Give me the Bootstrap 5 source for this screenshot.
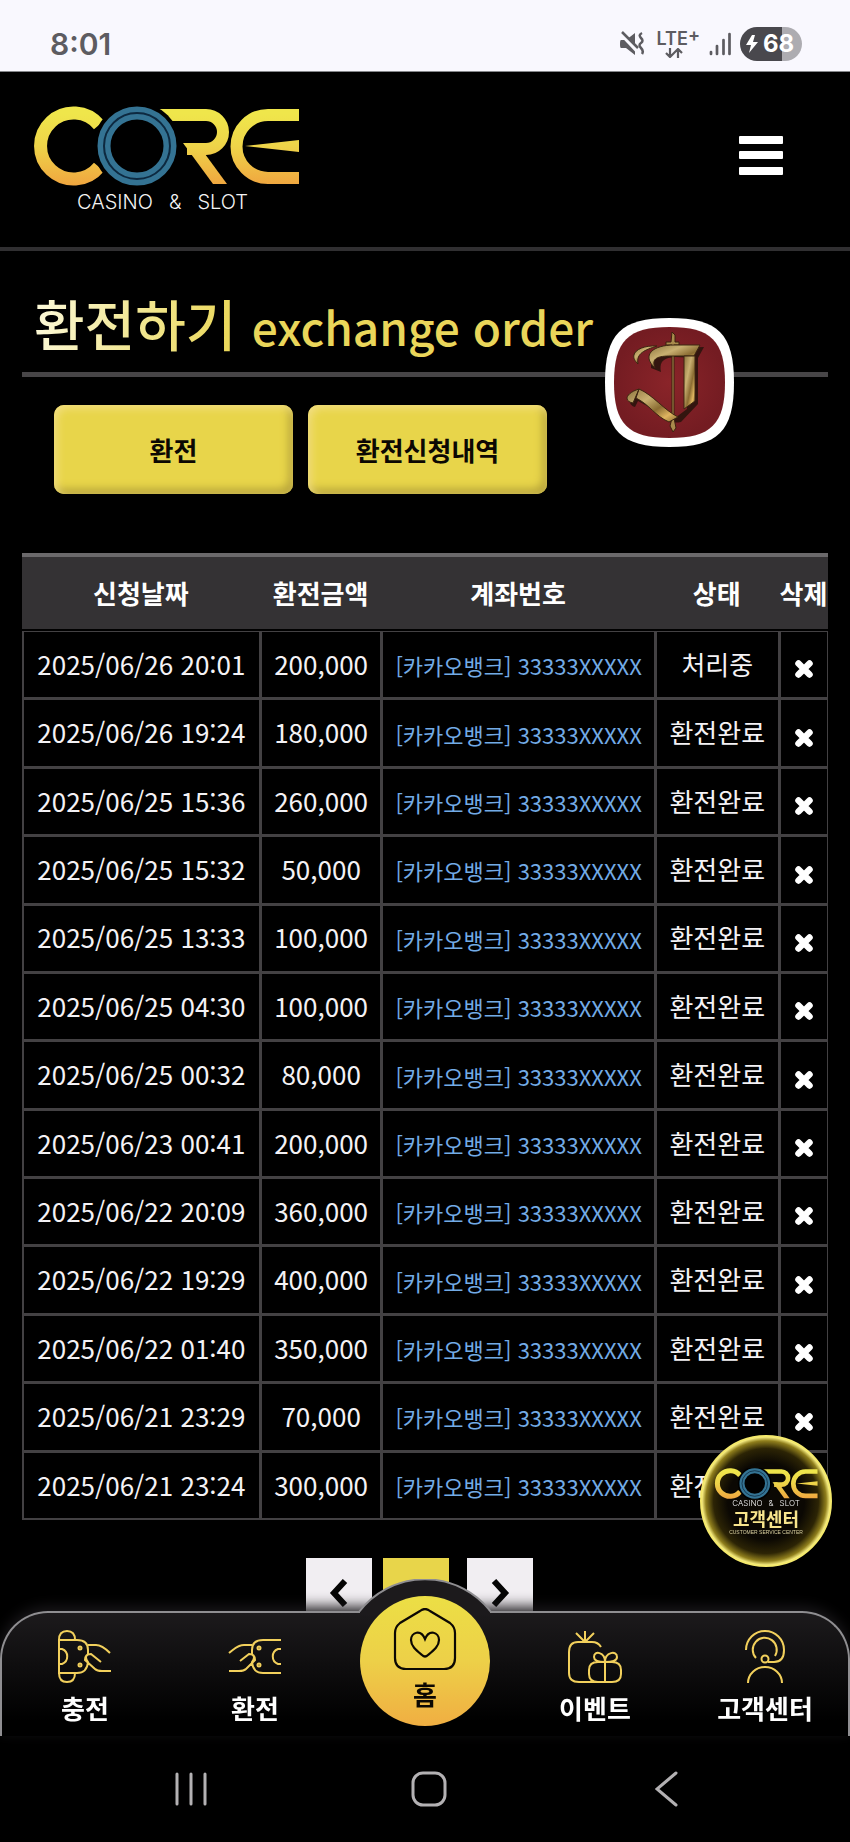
<!DOCTYPE html>
<html lang="ko">
<head>
<meta charset="utf-8">
<meta name="viewport" content="width=device-width, initial-scale=1">
<title>환전하기 - CORE CASINO &amp; SLOT</title>
<link rel="stylesheet" href="https://cdn.jsdelivr.net/npm/bootstrap@5.3.0/dist/css/bootstrap.min.css">
<style>
:root{--gold:#e8d54a;--line:#434143;--icon:#f2d05c}
body{background:#000;color:#f4f2f5;font-family:"Noto Sans CJK KR",sans-serif;font-size:26px;line-height:1.4}
a{color:inherit;text-decoration:none}
svg{display:block;flex:none}
.status-bar{height:72px;background:#f9f8fe;color:#5d5c61;padding:16px 48px 0 50px;font-family:Inter,sans-serif;border-bottom:1px solid #85878a}
.clock{font-size:30px;font-weight:600;line-height:32px}
.net{font-size:18px;font-weight:600;line-height:18px}
.net sup{font-size:18px;top:-3px;line-height:0;vertical-align:baseline}
.mute{margin-right:12px}
.battery{width:62px;height:34px;border-radius:17px;background:linear-gradient(90deg,#49484d 68%,#adacb1 68%);color:#fff;font-size:24px;font-weight:700;line-height:34px;padding-left:5px}
.top-head{height:179px;padding:34px 64px 0 32px;border-bottom:4px solid #302f31}
.tagline{font-family:Inter,sans-serif;font-size:20px;line-height:24px;font-weight:300;gap:16px;color:#f4f4f4}
.top-head .tagline{padding:4px 0 0 45px}
.burger{border:0;background:none;padding:0;margin-top:30px}
.page-head{margin:35px 22px 0;padding-left:12px;height:91px;border-bottom:5px solid #474547}
.page-title{font-size:55px;line-height:72px;font-weight:500;margin:0;white-space:nowrap}
.page-title span{background:linear-gradient(100deg,#fdfadd 0,#f3e99b 45%,#ead654 100%);-webkit-background-clip:text;background-clip:text;color:transparent}
.page-title .en{font-size:46px;background:none;color:#ead65a}
.tabs-row{padding:28px 54px 0;gap:15px}
.btn-gold{width:239px;height:89px;border:0;border-radius:10px;background:var(--gold);color:#0c0803;font-size:26px;font-weight:700;box-shadow:inset 3px 3px 8px #f3df83,inset -4px -5px 8px #b5a238}
.btn-gold:hover{background:var(--gold);color:#0c0803}
.order-wrap{margin:59px 22px 0}
.orders{table-layout:fixed;width:100%;height:967px;border-collapse:separate;border-spacing:0;text-align:center;white-space:nowrap}
.orders th{height:78px;padding:0;background:#343234;border-top:4px solid #6b696b;border-bottom:2px solid #000;font-size:26px;font-weight:700;color:#fff}
.orders td{padding:0 0 1px;border:solid var(--line);border-width:1px 1px 2px 2px;font-size:26px}
.orders td.acct{font-size:22px;color:#73abe6;padding:2px 0 0}
.orders td.del{padding:8px 0 0}
.del button{border:0;background:none;padding:0;color:#fff}
.c-date{width:29.5%}.c-amt{width:15.1%}.c-acct{width:33.9%}.c-state{width:15.4%}.c-del{width:6.1%}
.pager{margin:38px 0 0;padding:0 11px 200px 0}
.pager a{width:66px;height:66px;background:#f1eef2;color:#050505}
.pager a.now{background:var(--gold);margin:0 18px 0 11px}
.chat-app{position:absolute;left:605px;top:318px}
.service{position:fixed;right:18px;bottom:275px;width:132px;height:132px;border-radius:50%;background:radial-gradient(closest-side,#0b0803 60%,#2c2405 82%,#8f7e1c 94%,#f5eb80 100%);border:2px solid #f4e96d;padding-top:31px;z-index:5}
.service .tagline{font-size:8px;line-height:9px;gap:6px}
.service b{font-size:18px;line-height:20px;color:#f8e58c}
.service small{font-family:"Liberation Sans",sans-serif;font-size:5px;line-height:8px;color:#d8cfa0}
.tabbar{height:125px;border:2px solid #8f8e91;border-bottom:0;border-radius:48px 48px 0 0;background:linear-gradient(#1c1a1c,#000 88%);box-shadow:0 -4px 14px #1b191c;padding-top:17px;color:#fff}
.tab-row{margin:0 -2px}
.tabbar a{font-weight:700;font-size:26px;line-height:34px;gap:7px}
.tab-row>*{flex:1 1 0}
.tabbar svg{stroke:var(--icon)}
.bump{position:absolute;left:50%;top:-34px;margin-left:-70px}
.tabbar .home{position:absolute;left:50%;top:-17px;margin-left:-65px;width:130px;height:130px;border-radius:50%;background:linear-gradient(#ecdf45,#edd048 50%,#f0ae42);padding-top:12px;color:#0c0803;gap:6px}
.tabbar .home svg{stroke:#0c0803}
.sys-nav{height:106px;background:#000;padding:0 64px 0 72px}
.sys-nav button{border:0;background:none;flex:1 1 0;padding:0}
</style>
</head>
<body>
<svg width="0" height="0" class="position-absolute" aria-hidden="true">
  <defs>
    <linearGradient id="gold" gradientUnits="userSpaceOnUse" x1="0" y1="0" x2="0" y2="80"><stop offset=".1" stop-color="#efe64b"/><stop offset=".5" stop-color="#eed449"/><stop offset="1" stop-color="#f0a53f"/></linearGradient>
    <symbol id="core" viewBox="0 0 268 80">
      <path d="M67 19A33 33 0 1 0 67 61" fill="none" stroke="url(#gold)" stroke-width="13"/>
      <g fill="none" stroke-width="12" stroke="url(#gold)"><path d="M125 9H174A17 17 0 0 1 174 43H155"/><path d="M267 9H236A31.500 31.500 0 0 0 236 72H267"/></g>
      <path d="M151 37H163L173 48L195 78H181Z" fill="url(#gold)"/>
      <path d="M213 40L267 34V46Z" fill="url(#gold)"/>
      <circle cx="105" cy="40" r="43.500" fill="#000"/>
      <circle cx="105" cy="40" r="33" fill="none" stroke="#347393" stroke-width="13"/>
      <circle cx="105" cy="40" r="33" fill="none" stroke="#0d2940" stroke-width="2"/>
    </symbol>
    <symbol id="x" viewBox="0 0 20 20"><path d="M4.500 4.500L15.500 15.500M15.500 4.500L4.500 15.500" stroke="currentColor" stroke-width="6.500" stroke-linecap="round"/></symbol>
  </defs>
</svg>

<div class="status-bar d-flex justify-content-between align-items-center">
  <span class="clock">8:01</span>
  <div class="d-flex align-items-center">
    <svg class="mute" width="26" height="26" viewBox="0 0 26 26" fill="#5d5c61"><path d="M2 9h5l9-7v22l-9-7H2Q1 17 1 13T2 9Z"/><path d="M1 1L20 21" stroke="#f9f8fe" stroke-width="5"/><path d="M3 1L19 17" stroke="#5d5c61" stroke-width="2.500"/><path d="M23 2q-4 2-1 5t0 5t0 5t1 6" fill="none" stroke="#5d5c61" stroke-width="2.500"/></svg>
    <div class="net d-flex flex-column align-items-start me-2"><span>LTE<sup>+</sup></span><svg class="ms-2" width="18" height="10" viewBox="0 0 18 10" fill="none" stroke="#5d5c61" stroke-width="2.200"><path d="M5 0V8M1 5L5 9L9 5M13 10V2M9 5L13 1L17 5"/></svg></div>
    <svg width="24" height="24" viewBox="0 0 24 24" stroke="#5d5c61" stroke-width="2.700" stroke-linecap="round"><path d="M3 20V22M9 14V22M15.500 8V22M21.500 2V22"/></svg>
    <div class="battery d-flex align-items-center ms-2"><svg width="14" height="18" viewBox="0 0 14 18" fill="#fff"><path d="M7 0L1 10H6L4 18L13 7H8L10 0Z"/></svg><span class="ms-1">68</span></div>
  </div>
</div>

<header class="top-head d-flex justify-content-between align-items-start">
  <a href="#" aria-label="CORE CASINO &amp; SLOT">
    <svg width="268" height="80"><use href="#core"/></svg>
    <div class="tagline d-flex"><span>CASINO</span><span>&amp;</span><span>SLOT</span></div>
  </a>
  <button class="burger" type="button" aria-label="메뉴"><svg width="50" height="40" viewBox="0 0 50 40" fill="#fff"><rect x="3" width="44" height="8" rx="1"/><rect x="3" y="15" width="44" height="8" rx="1"/><rect x="3" y="31" width="44" height="8" rx="1"/></svg></button>
</header>

<main>
  <div class="page-head"><h1 class="page-title"><span>환전하기</span> <span class="en">exchange order</span></h1></div>
  <div class="tabs-row d-flex">
    <button class="btn btn-gold" type="button">환전</button>
    <button class="btn btn-gold" type="button">환전신청내역</button>
  </div>
  <div class="order-wrap">
  <table class="orders">
    <thead><tr><th class="c-date">신청날짜</th><th class="c-amt">환전금액</th><th class="c-acct">계좌번호</th><th class="c-state">상태</th><th class="c-del">삭제</th></tr></thead>
    <tbody>
      <tr><td>2025/06/26 20:01</td><td>200,000</td><td class="acct">[카카오뱅크] 33333XXXXX</td><td>처리중</td><td class="del"><button type="button" aria-label="삭제"><svg width="20" height="20"><use href="#x"/></svg></button></td></tr>
      <tr><td>2025/06/26 19:24</td><td>180,000</td><td class="acct">[카카오뱅크] 33333XXXXX</td><td>환전완료</td><td class="del"><button type="button" aria-label="삭제"><svg width="20" height="20"><use href="#x"/></svg></button></td></tr>
      <tr><td>2025/06/25 15:36</td><td>260,000</td><td class="acct">[카카오뱅크] 33333XXXXX</td><td>환전완료</td><td class="del"><button type="button" aria-label="삭제"><svg width="20" height="20"><use href="#x"/></svg></button></td></tr>
      <tr><td>2025/06/25 15:32</td><td>50,000</td><td class="acct">[카카오뱅크] 33333XXXXX</td><td>환전완료</td><td class="del"><button type="button" aria-label="삭제"><svg width="20" height="20"><use href="#x"/></svg></button></td></tr>
      <tr><td>2025/06/25 13:33</td><td>100,000</td><td class="acct">[카카오뱅크] 33333XXXXX</td><td>환전완료</td><td class="del"><button type="button" aria-label="삭제"><svg width="20" height="20"><use href="#x"/></svg></button></td></tr>
      <tr><td>2025/06/25 04:30</td><td>100,000</td><td class="acct">[카카오뱅크] 33333XXXXX</td><td>환전완료</td><td class="del"><button type="button" aria-label="삭제"><svg width="20" height="20"><use href="#x"/></svg></button></td></tr>
      <tr><td>2025/06/25 00:32</td><td>80,000</td><td class="acct">[카카오뱅크] 33333XXXXX</td><td>환전완료</td><td class="del"><button type="button" aria-label="삭제"><svg width="20" height="20"><use href="#x"/></svg></button></td></tr>
      <tr><td>2025/06/23 00:41</td><td>200,000</td><td class="acct">[카카오뱅크] 33333XXXXX</td><td>환전완료</td><td class="del"><button type="button" aria-label="삭제"><svg width="20" height="20"><use href="#x"/></svg></button></td></tr>
      <tr><td>2025/06/22 20:09</td><td>360,000</td><td class="acct">[카카오뱅크] 33333XXXXX</td><td>환전완료</td><td class="del"><button type="button" aria-label="삭제"><svg width="20" height="20"><use href="#x"/></svg></button></td></tr>
      <tr><td>2025/06/22 19:29</td><td>400,000</td><td class="acct">[카카오뱅크] 33333XXXXX</td><td>환전완료</td><td class="del"><button type="button" aria-label="삭제"><svg width="20" height="20"><use href="#x"/></svg></button></td></tr>
      <tr><td>2025/06/22 01:40</td><td>350,000</td><td class="acct">[카카오뱅크] 33333XXXXX</td><td>환전완료</td><td class="del"><button type="button" aria-label="삭제"><svg width="20" height="20"><use href="#x"/></svg></button></td></tr>
      <tr><td>2025/06/21 23:29</td><td>70,000</td><td class="acct">[카카오뱅크] 33333XXXXX</td><td>환전완료</td><td class="del"><button type="button" aria-label="삭제"><svg width="20" height="20"><use href="#x"/></svg></button></td></tr>
      <tr><td>2025/06/21 23:24</td><td>300,000</td><td class="acct">[카카오뱅크] 33333XXXXX</td><td>환전완료</td><td class="del"><button type="button" aria-label="삭제"><svg width="20" height="20"><use href="#x"/></svg></button></td></tr>
    </tbody>
  </table>
  </div>
  <nav class="pager d-flex justify-content-center" aria-label="페이지">
    <a href="#" aria-label="이전" class="d-flex justify-content-center align-items-center pt-1"><svg width="20" height="28" viewBox="0 0 20 28" fill="none" stroke="currentColor" stroke-width="6"><path d="M16 2L5 14L16 26"/></svg></a>
    <a href="#" aria-label="1" class="now"></a>
    <a href="#" aria-label="다음" class="d-flex justify-content-center align-items-center pt-1"><svg width="20" height="28" viewBox="0 0 20 28" fill="none" stroke="currentColor" stroke-width="6"><path d="M4 2L15 14L4 26"/></svg></a>
  </nav>
</main>

<a class="chat-app" href="#" aria-label="J">
  <svg width="129" height="129" viewBox="0 0 129 129">
    <defs><radialGradient id="red"><stop stop-color="#8a2429"/><stop offset="1" stop-color="#741c22"/></radialGradient><linearGradient id="brass" x1="0" x2="1" y2="1"><stop stop-color="#8c743d"/><stop offset=".35" stop-color="#c9b071"/><stop offset=".6" stop-color="#8a6c32"/><stop offset=".8" stop-color="#e0b560"/><stop offset="1" stop-color="#80602b"/></linearGradient></defs>
    <path d="M64.500 0C113 0 129 16 129 64.500S113 129 64.500 129S0 113 0 64.500S16 0 64.500 0Z" fill="#fff"/>
    <path d="M64.500 9C106 9 120 23 120 64.500S106 120 64.500 120S9 106 9 64.500S23 9 64.500 9Z" fill="url(#red)"/>
    <g transform="translate(2 2)" fill="#33150f"><path d="M44 48C44 33 56 27 70 28L97 27L91 38L68 37C58 38 52 40 54 52ZM80 38H91V84L74 102C58 105 51 94 42 87L31 81L28 87C19 84 23 76 34 71C48 77 57 91 68 98L80 89Z"/></g>
    <path d="M67 14L70 17V24H74V27H69V100L71 110L68 114L65 108L67 100V27H61V24H66Z" fill="#a98b4c" stroke="#3d210f"/>
    <g fill="url(#brass)" stroke="#3c2611"><path d="M33 46C22 36 34 27 52 28C40 32 31 35 33 46Z"/><path d="M50 50C36 37 48 27 69 27H95L89 38H66C53 38 46 40 50 50Z"/><path d="M79 38H90V83L79 91Z"/><path d="M34 71L28 85C18 83 21 75 34 71C48 77 59 92 73 99L64 104C50 98 45 87 31 80Z"/></g>
  </svg>
</a>

<a class="service d-flex flex-column align-items-center" href="#">
  <svg width="104" height="31"><use href="#core"/></svg>
  <span class="tagline d-flex"><span>CASINO</span><span>&amp;</span><span>SLOT</span></span>
  <b>고객센터</b>
  <small>CUSTOMER SERVICE CENTER</small>
</a>

<div class="fixed-bottom">
  <nav class="tabbar position-relative" aria-label="하단 메뉴">
    <svg class="bump" width="140" height="36" viewBox="0 0 140 36" fill="#1c1a1c"><path d="M5 32A83 83 0 0 1 135 32V36H5Z" style="stroke:none"/><path d="M4 33A83 83 0 0 1 136 33" style="stroke:#8f8e91" stroke-width="2"/></svg>
    <div class="tab-row d-flex">
    <a href="#" class="d-flex flex-column align-items-center"><svg width="54" height="54" viewBox="0 0 54 54" fill="none" stroke-width="2"><path d="M1 10H19Q30 10 30 20V24Q26 27 30 32Q29 43 19 43H1ZM1 10Q1 1 9 1T17 10M1 43Q1 52 9 52T17 43M1 10V43M1 19H4A8 8 0 0 1 4 34H1M30 15H38Q44 15 52 23M43 32L33 24Q27 24 27 30L37 39Q39 41 44 41H53"/><circle cx="22" cy="18" r="1.500"/><circle cx="22" cy="35" r="1.500"/></svg>충전</a>
    <a href="#" class="d-flex flex-column align-items-center"><svg width="54" height="54" viewBox="0 0 54 54" fill="none" stroke-width="2"><path d="M53 10H35Q24 10 24 20V24Q28 27 24 32Q25 43 35 43H53M53 19H50A8 8 0 0 0 50 34H53M24 15H16Q10 15 1 23M12 31L21 24Q27 24 27 30L18 39Q16 41 11 41H1"/><circle cx="31" cy="18" r="1.500"/><circle cx="31" cy="35" r="1.500"/></svg>환전</a>
    <div></div>
    <a href="#" class="d-flex flex-column align-items-center"><svg width="54" height="54" viewBox="0 0 54 54" fill="none" stroke-width="2"><path d="M33 17Q30 12 24 12H10Q1 12 1 22V43Q1 52 11 52H29M17 12V1M17 12L8 3M17 12L26 3M30 32H44Q53 32 53 40V44Q53 52 44 52H30Q21 52 21 44V40Q21 32 30 32ZM37 32V52M37 32Q26 32 26 27C26 20 37 22 37 32C37 22 49 20 49 27Q49 32 37 32"/></svg>이벤트</a>
    <a href="#" class="d-flex flex-column align-items-center"><svg width="54" height="54" viewBox="0 0 54 54" fill="none" stroke-width="2"><path d="M8 20A19 19 0 1 1 46 20Q46 32 36 32H30M18 28A12 12 0 1 1 37 26M10 53A17 16 0 0 1 44 53"/><circle cx="27" cy="29" r="3.500"/></svg>고객센터</a>
    </div>
    <a href="#" class="home d-flex flex-column align-items-center"><svg width="64" height="63" viewBox="0 0 64 63" fill="none" stroke-width="2.200"><path d="M27 3Q32 -1 37 3L57 15Q62 19 62 25V50Q62 61 51 61H13Q2 61 2 50V25Q2 19 7 15Z"/><path d="M32 31C28 21 18 24 18 32C18 38 23 42 29 47Q32 50 35 47C41 42 46 38 46 32C46 24 36 21 32 31Z"/></svg>홈</a>
  </nav>
  <div class="sys-nav d-flex align-items-center">
    <button type="button" aria-label="최근 앱"><svg class="mx-auto" width="32" height="34" viewBox="0 0 32 34" stroke="#b3b1b3" stroke-width="3" stroke-linecap="round"><path d="M2 2V32M16 2V32M30 2V32"/></svg></button>
    <button type="button" aria-label="홈 화면"><svg class="mx-auto" width="36" height="36" viewBox="0 0 36 36"><rect x="2" y="2" width="32" height="32" rx="10" fill="none" stroke="#b3b1b3" stroke-width="3"/></svg></button>
    <button type="button" aria-label="뒤로"><svg class="mx-auto" width="24" height="36" viewBox="0 0 24 36" fill="none" stroke="#b3b1b3" stroke-width="3" stroke-linecap="round"><path d="M21 2L2 18L21 34"/></svg></button>
  </div>
</div>
<script src="https://cdn.jsdelivr.net/npm/bootstrap@5.3.0/dist/js/bootstrap.bundle.min.js"></script>
</body>
</html>
